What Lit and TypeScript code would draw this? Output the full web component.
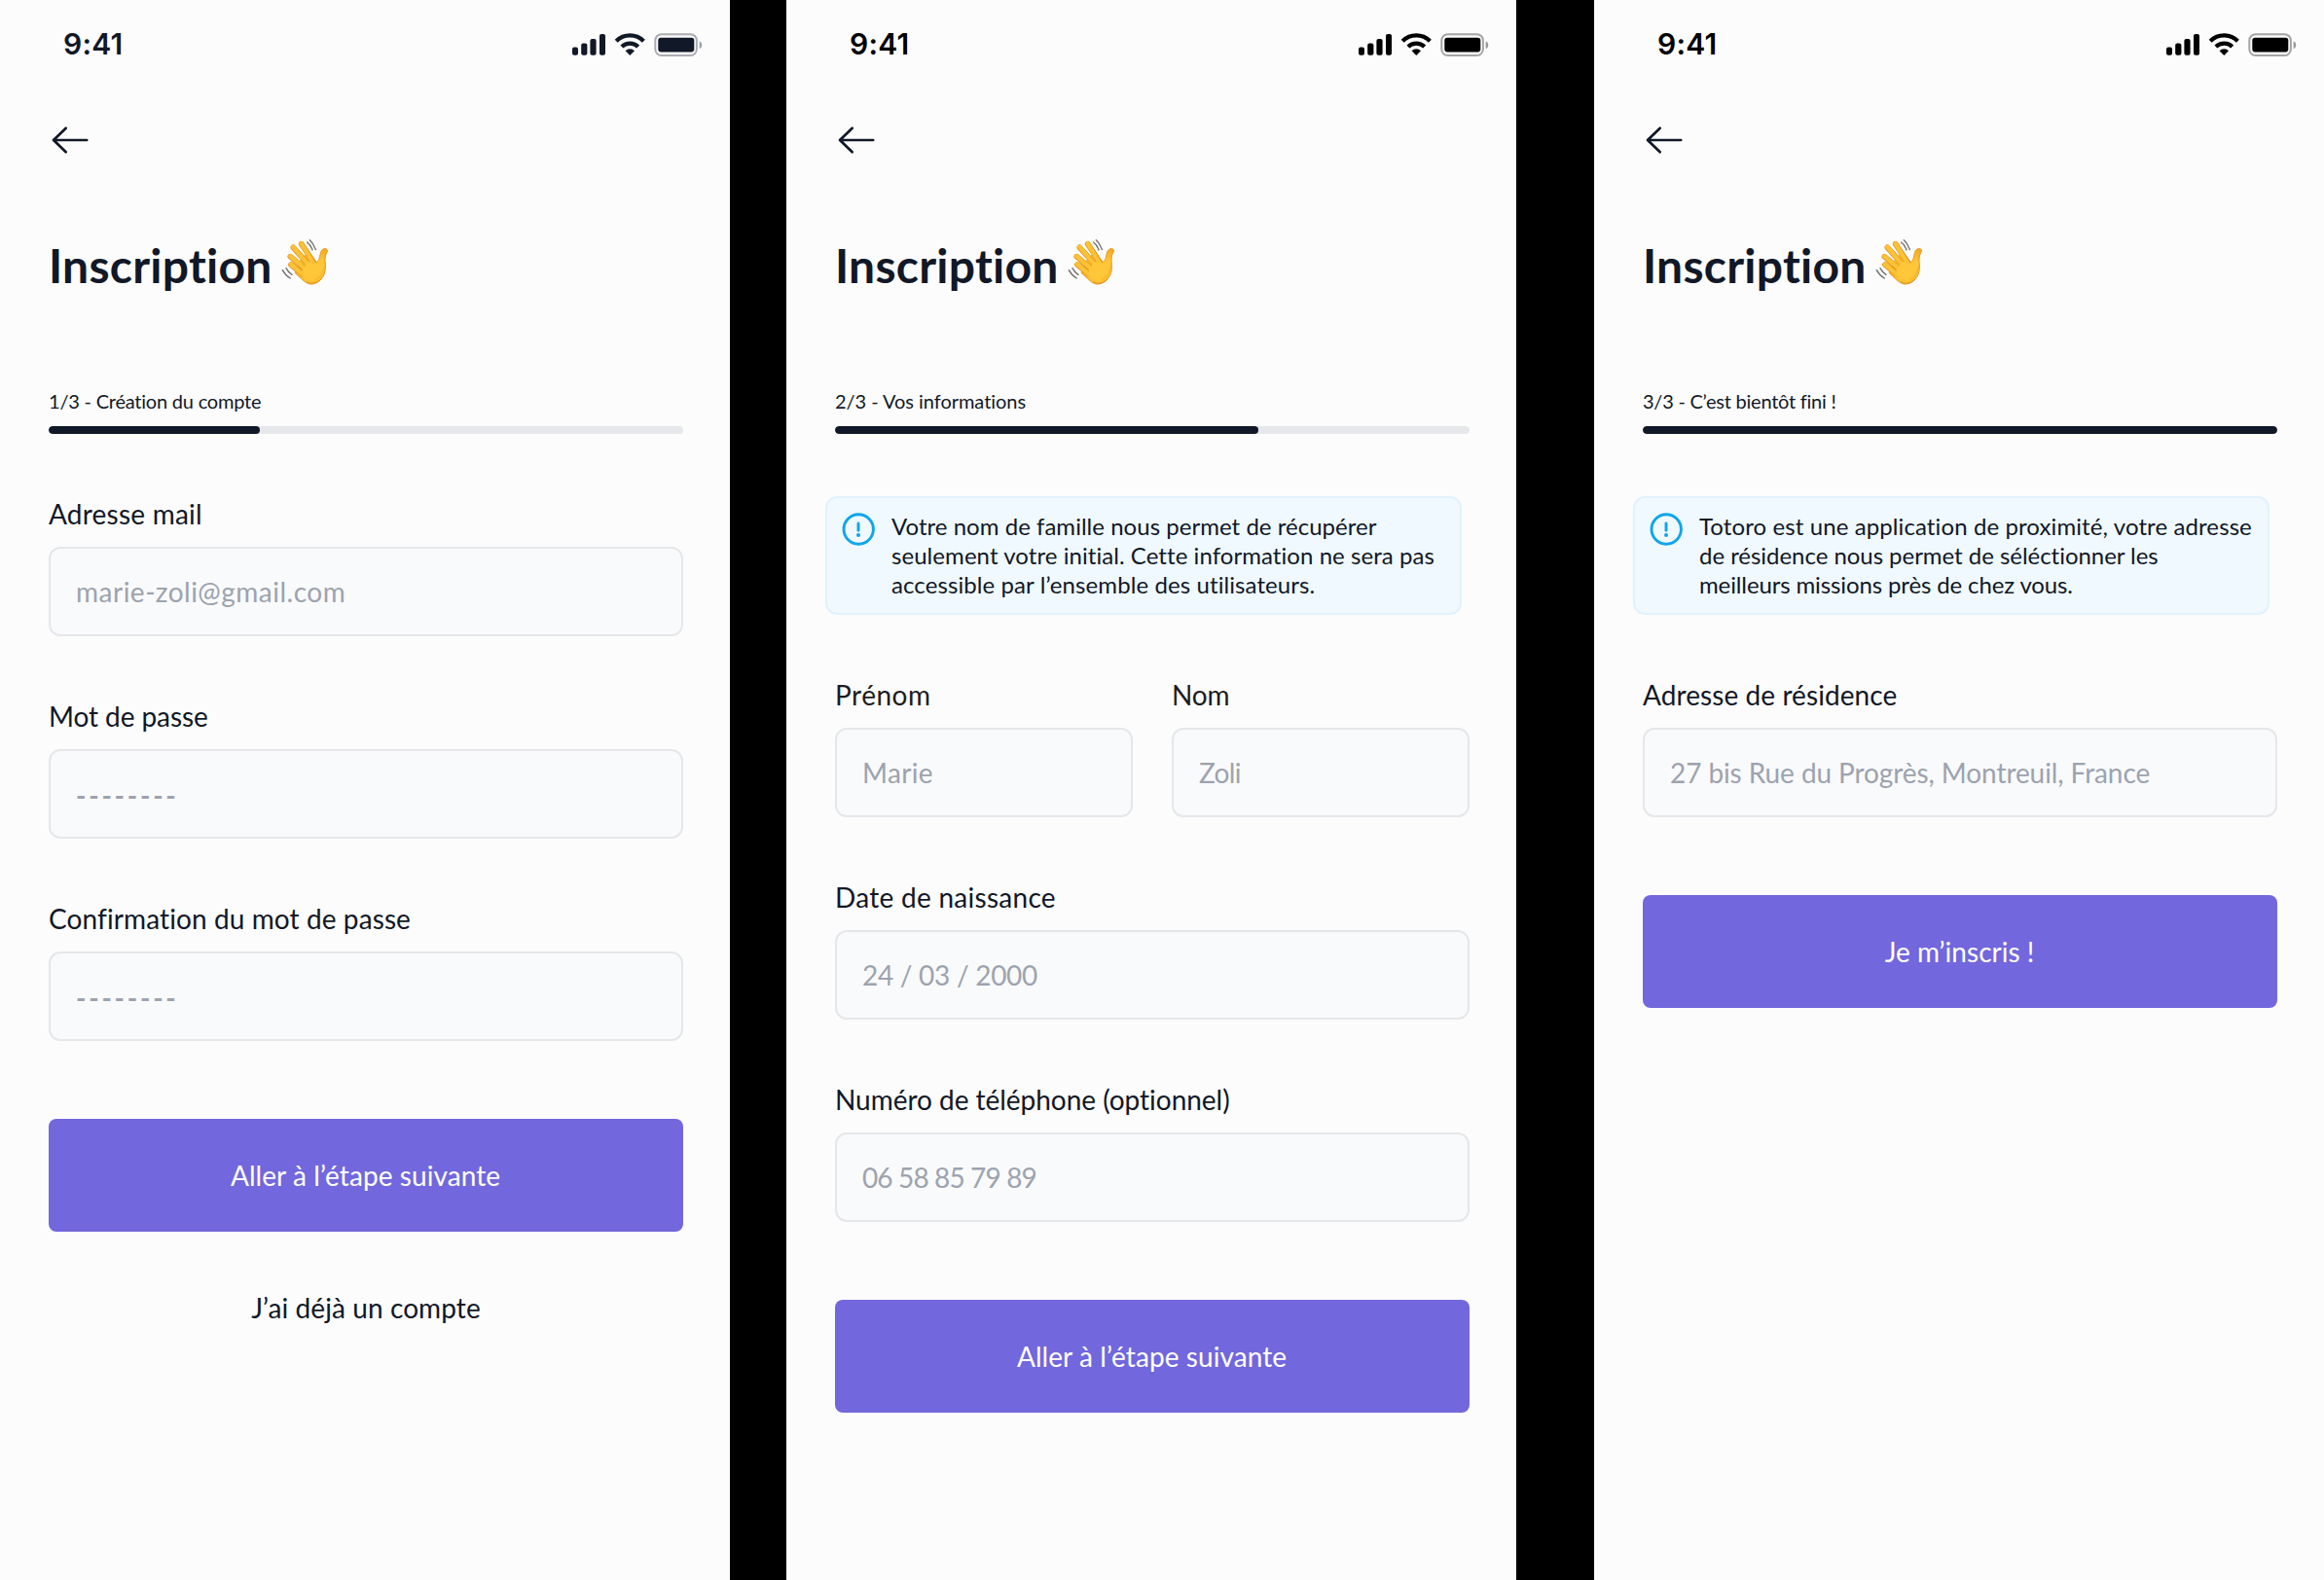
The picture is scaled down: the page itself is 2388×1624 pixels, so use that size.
import { LitElement, html, css, nothing } from "lit";
import { customElement, property } from "lit/decorators.js";
import { classMap } from "lit/directives/class-map.js";

/** A string with the tracking (px) it is set in. */
interface Copy {
  text: string;
  track?: number;
}

interface Field {
  label: Copy;
  placeholder: Copy;
  muted?: boolean;
  masked?: boolean;
}

interface Step {
  caption: Copy;
  progress: number;
  notice?: Copy[];
  rows: Field[][];
  action: Copy;
  link?: Copy;
  darkStatus: boolean;
}

const STEPS: Step[] = [
  {
    caption: { text: "1/3 - Création du compte", track: -0.213 },
    progress: 1 / 3,
    rows: [
      [{ label: { text: "Adresse mail", track: 0.22 }, placeholder: { text: "marie-zoli@gmail.com", track: 0.5 } }],
      [{ label: { text: "Mot de passe", track: -0.08 }, placeholder: { text: "--------", track: 2.75 }, masked: true }],
      [{ label: { text: "Confirmation du mot de passe", track: 0.1 }, placeholder: { text: "--------", track: 2.75 }, masked: true }],
    ],
    action: { text: "Aller à l’étape suivante", track: 0.07 },
    link: { text: "J’ai déjà un compte", track: 0.09 },
    darkStatus: false,
  },
  {
    caption: { text: "2/3 - Vos informations", track: -0.033 },
    progress: 2 / 3,
    notice: [
      { text: "Votre nom de famille nous permet de récupérer", track: 0.03 },
      { text: "seulement votre initial. Cette information ne sera pas", track: 0.06 },
      { text: "accessible par l’ensemble des utilisateurs.", track: 0.09 },
    ],
    rows: [
      [
        { label: { text: "Prénom", track: 0.5 }, placeholder: { text: "Marie", track: 0.35 }, muted: true },
        { label: { text: "Nom", track: -0.21 }, placeholder: { text: "Zoli", track: -0.6 }, muted: true },
      ],
      [{ label: { text: "Date de naissance", track: 0.28 }, placeholder: { text: "24 / 03 / 2000", track: -0.275 } }],
      [{ label: { text: "Numéro de téléphone (optionnel)", track: -0.03 }, placeholder: { text: "06 58 85 79 89", track: -0.87 } }],
    ],
    action: { text: "Aller à l’étape suivante", track: 0.07 },
    darkStatus: true,
  },
  {
    caption: { text: "3/3 - C’est bientôt fini !", track: -0.239 },
    progress: 1,
    notice: [
      { text: "Totoro est une application de proximité, votre adresse", track: 0.1 },
      { text: "de résidence nous permet de séléctionner les", track: -0.038 },
      { text: "meilleurs missions près de chez vous.", track: -0.125 },
    ],
    rows: [
      [{ label: { text: "Adresse de résidence", track: 0.077 }, placeholder: { text: "27 bis Rue du Progrès, Montreuil, France", track: -0.09 } }],
    ],
    action: { text: "Je m’inscris !", track: 0.023 },
    darkStatus: true,
  },
];

const copy = (c: Copy) => html`<span style="letter-spacing:${c.track ?? 0}px">${c.text}</span>`;

const statusIcons = html`
  <svg class="status-icons" width="136" height="28" viewBox="0 0 136 28" fill="currentColor">
    <rect x="0" y="14.6" width="6" height="8.2" rx="2"></rect>
    <rect x="9.2" y="10.4" width="6.2" height="12.4" rx="2"></rect>
    <rect x="18.4" y="6" width="6.2" height="16.8" rx="2"></rect>
    <rect x="28" y="1" width="6" height="21.8" rx="2"></rect>
    <g fill="none" stroke="currentColor" stroke-width="4.2">
      <path d="M45.2 8.2A20 20 0 0 1 73.4 8.2"></path>
      <path d="M50.9 14A12 12 0 0 1 67.7 14"></path>
    </g>
    <path d="M54.9 18.2A6.4 6.4 0 0 1 63.7 18.2L59.3 22.7Z" stroke="currentColor" stroke-width=".5" stroke-linejoin="round"></path>
    <rect x="85.3" y="1.2" width="42.6" height="21.8" rx="6.4" fill="none" stroke="currentColor" stroke-width="2" opacity=".35"></rect>
    <rect x="88.3" y="4.8" width="37" height="14.6" rx="2.8"></rect>
    <path d="M130.7 8.2V16.2A4.4 4.4 0 0 0 130.7 8.2Z" opacity=".4"></path>
  </svg>`;

const backArrow = html`
  <svg class="back" width="48" height="32" viewBox="0 0 48 32" fill="none" stroke="currentColor"
    stroke-width="2.7" stroke-linecap="round" stroke-linejoin="round">
    <path d="M39.2 16H5.2M17.7 3.7L5 16L17.7 28.3"></path>
  </svg>`;

const infoIcon = html`
  <svg class="info" width="36" height="36" viewBox="0 0 36 36" fill="none" stroke="#0ea5e9"
    stroke-width="2.9" stroke-linecap="round">
    <circle cx="18.2" cy="18" r="15.2"></circle>
    <path d="M18 12V19.2"></path>
    <circle cx="18" cy="24" r="2" fill="#0ea5e9" stroke="none"></circle>
  </svg>`;

const wave = html`
  <svg class="wave" width="60" height="60" viewBox="0 0 180 180" fill="none" stroke-linecap="round" stroke-linejoin="round">
    <defs>
      <radialGradient id="skin" gradientUnits="userSpaceOnUse" cx="108" cy="112" r="72">
        <stop offset="0" stop-color="#ffcd3e"></stop>
        <stop offset=".6" stop-color="#fdc132"></stop>
        <stop offset="1" stop-color="#f3a81f"></stop>
      </radialGradient>
    </defs>
    <path d="M72 92L96 66L124 94C130 92 133 82 135 70C138 56 145 52 152 53C160 55 158 61 156 64C149 74 150 88 151 102C154 128 141 157 111 162C98 164 87 155 76 145L58 128Z" fill="url(#skin)" stroke="#df8d16" stroke-width="2.5"></path>
    <g stroke="#df8d16" stroke-width="17">
      <path d="M45 102L82 132"></path>
      <path d="M43 77L88 115"></path>
      <path d="M52 49L98 100"></path>
      <path d="M77 38L114 94"></path>
    </g>
    <g stroke="#fcc235" stroke-width="13.5">
      <path d="M45 101L84 134"></path>
      <path d="M43 76L94 120"></path>
      <path d="M52 48L104 108"></path>
      <path d="M77 37L118 104"></path>
    </g>
    <path d="M80 119L98 92L120 98C134 98 142 92 144 82C148 102 149 128 134 144C116 160 100 152 84 138Z" fill="#fec639"></path>
    <path d="M122 148C136 141 145 126 147 110" stroke="#f5ae24" stroke-width="5" opacity=".55"></path>
    <path d="M94 156C106 163 126 161 138 147" stroke="#e08a18" stroke-width="3" opacity=".7"></path>
    <g stroke="#6f6f6f" stroke-width="4">
      <path d="M103 26C112 34 117 43 121 56"></path>
      <path d="M95 33C104 40 108 47 111 57"></path>
      <path d="M19 119C25 131 33 138 43 144"></path>
      <path d="M30 113C34 121 40 128 48 133"></path>
    </g>
  </svg>`;

@customElement("signup-screen")
export class SignupScreen extends LitElement {
  @property({ attribute: false }) step!: Step;

  static styles = css`
    :host {
      display: block;
      box-sizing: border-box;
      width: 750px;
      height: 1624px;
      padding: 0 48px 0 50px;
      background: #fcfcfc;
      color: #111827;
      font-family: Lato, "Liberation Sans", sans-serif;
      font-size: 28px;
      line-height: 36px;
      overflow: hidden;
    }
    .status {
      display: flex;
      justify-content: space-between;
      align-items: flex-start;
      height: 128px;
      box-sizing: border-box;
      padding: 27px 0 0 15px;
      margin-right: -22px;
    }
    .status.dark { color: #000; }
    .time {
      font: 600 30px/36px Inter, "Liberation Sans", sans-serif;
      letter-spacing: 0.2px;
    }
    .status-icons { margin-top: 7px; }
    svg { display: block; flex: none; }
    .title {
      display: flex;
      margin: 82px 0 0;
      height: 58px;
      font-size: 48px;
      line-height: 58px;
      font-weight: 700;
    }
    .title-text { width: 234px; padding-top: 2px; letter-spacing: 0.25px; }
    .wave { margin-top: -4px; }
    .caption {
      margin-top: 100px;
      font-size: 20px;
      line-height: 24px;
    }
    .track {
      height: 8px;
      margin-top: 14px;
      border-radius: 4px;
      background: #e5e7eb;
      overflow: hidden;
    }
    .bar { height: 100%; border-radius: 4px; background: #111827; }
    .notice {
      display: flex;
      box-sizing: border-box;
      width: 654px;
      height: 122px;
      margin: 64px 0 0 -10px;
      padding: 14px 0 0 14px;
      border: 2px solid #e0f2fe;
      border-radius: 12px;
      background: #f0f9ff;
      font-size: 24px;
      line-height: 30px;
      gap: 16px;
    }
    .line { display: block; white-space: nowrap; }
    .form {
      display: flex;
      flex-direction: column;
      gap: 63px;
      margin-top: 63px;
    }
    .row { display: flex; gap: 40px; }
    .field { flex: 1; min-width: 0; }
    .field.muted .label { color: #1c1c1e; }
    .label { display: block; padding-top: 1px; white-space: nowrap; }
    .input {
      display: flex;
      align-items: center;
      box-sizing: border-box;
      height: 92px;
      margin-top: 16px;
      padding: 0 26px;
      border: 2px solid #e5e7eb;
      border-radius: 12px;
      background: #f9fafb;
      color: #9ca3af;
      white-space: nowrap;
    }
    .field.masked .input { padding-top: 1px; font-weight: 700; }
    .action {
      display: flex;
      align-items: center;
      justify-content: center;
      box-sizing: border-box;
      width: 100%;
      height: 116px;
      margin: 80px 0 0;
      padding: 0 1px 0 0;
      border: 0;
      border-radius: 8px;
      background: #7267dd;
      color: #fff;
      font: inherit;
    }
    .link { margin-top: 60px; text-align: center; }
  `;

  private field(f: Field) {
    return html`<div class=${classMap({ field: true, muted: !!f.muted, masked: !!f.masked })}>
      <span class="label">${copy(f.label)}</span>
      <div class="input">${copy(f.placeholder)}</div>
    </div>`;
  }

  render() {
    const s = this.step;
    return html`
      <div class=${classMap({ status: true, dark: s.darkStatus })}>
        <span class="time">9:41</span>${statusIcons}
      </div>
      ${backArrow}
      <h1 class="title"><span class="title-text">Inscription</span>${wave}</h1>
      <div class="caption">${copy(s.caption)}</div>
      <div class="track"><div class="bar" style="width:${s.progress * 100}%"></div></div>
      ${s.notice
        ? html`<div class="notice">${infoIcon}
            <div>${s.notice.map((l) => html`<span class="line">${copy(l)}</span>`)}</div>
          </div>`
        : nothing}
      <div class="form">
        ${s.rows.map((r) => html`<div class="row">${r.map((f) => this.field(f))}</div>`)}
      </div>
      <button class="action">${copy(s.action)}</button>
      ${s.link ? html`<div class="link">${copy(s.link)}</div>` : nothing}
    `;
  }
}

@customElement("app-root")
export class AppRoot extends LitElement {
  static styles = css`
    :host {
      display: grid;
      grid-template-columns: 808px 830px 750px;
      width: 2388px;
      height: 1624px;
      background: #000;
      overflow: hidden;
    }
  `;

  render() {
    return STEPS.map((s) => html`<signup-screen .step=${s}></signup-screen>`);
  }
}
